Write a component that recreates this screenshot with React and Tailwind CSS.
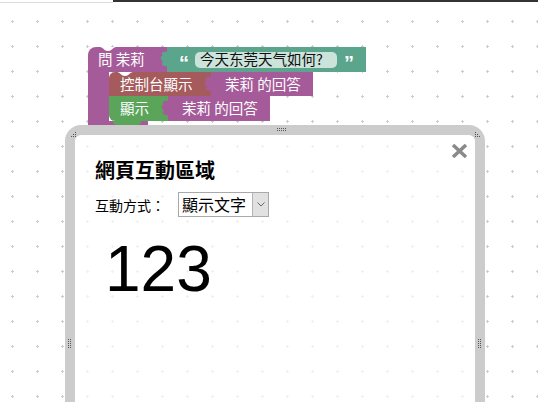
import React from 'react'

const CJK = { fontFamily: '"Noto Sans CJK TC", "Noto Sans CJK SC", sans-serif' }

const Tab = ({ color }) => (
  <svg className="absolute left-[-7px] top-[4px]" width="8" height="16" viewBox="0 0 8 16">
    <path d="M8 0 L8 16 L8 15 C3 16 0 13 3 11 C0 9 0 4 3 5 C0 2 3 0 8 1 Z" fill={color} />
  </svg>
)

const Notch = ({ left }) => (
  <svg className={'absolute top-0 ' + left} width="16" height="5" viewBox="0 0 16 5">
    <path d="M0 0 C3 0 4 4 8 4 C12 4 13 0 16 0 Z" fill="#ffffff" />
  </svg>
)

const Dots = ({ cols, rows, className }) => (
  <svg className={className} width={cols * 2} height={rows * 2}>
    {Array.from({ length: rows }).map((_, r) =>
      Array.from({ length: cols }).map((_, c) => (
        <rect key={r + '-' + c} x={c * 2} y={r * 2} width="1" height="1" fill="#555" />
      ))
    )}
  </svg>
)

const Grip = ({ className }) => (
  <svg className={className} width="8" height="8">
    <rect x="4" y="0" width="1" height="1" fill="#555" />
    <rect x="2" y="2" width="1" height="1" fill="#555" />
    <rect x="4" y="2" width="1" height="1" fill="#555" />
    <rect x="0" y="4" width="1" height="1" fill="#555" />
    <rect x="2" y="4" width="1" height="1" fill="#555" />
    <rect x="4" y="4" width="1" height="1" fill="#555" />
  </svg>
)

const Workspace = () => (
  <svg className="absolute inset-0" width="538" height="402">
    <defs>
      <pattern id="grid" x="0" y="9" width="25" height="25" patternUnits="userSpaceOnUse">
        <rect x="11" y="12" width="3" height="1" fill="#cccccc" />
        <rect x="12" y="11" width="1" height="3" fill="#cccccc" />
      </pattern>
    </defs>
    <rect x="0" y="3" width="538" height="399" fill="url(#grid)" />
  </svg>
)

// value block that plugs into the block on its left
const Value = ({ children, width }) => (
  <div className={'relative h-full bg-[#a55b99] flex items-center pl-[14px] ' + width}>
    <Tab color="#a55b99" />
    <span className="whitespace-nowrap">{children}</span>
  </div>
)

const Blocks = () => (
  <div className="absolute left-[88px] top-[47px] flex flex-col text-white text-[14.5px] leading-none" style={CJK}>
    {/* ask block header */}
    <div className="flex h-[25px]">
      <div className="relative w-[79px] bg-[#a55b99] rounded-tl-[8px] flex items-center pl-[10px]">
        <Notch left="left-[12px]" />
        <span className="whitespace-nowrap">問 茉莉</span>
      </div>
      <div className="relative w-[199px] bg-[#5ba58c] flex items-center">
        <Tab color="#5ba58c" />
        <span className="ml-[12px] mt-[6px] font-bold text-[20px] leading-none" style={{ fontFamily: '"Liberation Sans", Arial, sans-serif' }}>“</span>
        <span className="ml-[6px] h-[16px] w-[142px] rounded-[5px] bg-[#cbe3da] text-[#111] flex items-center pl-[5px] whitespace-nowrap">今天东莞天气如何?</span>
        <span className="ml-[7px] mt-[6px] font-bold text-[20px] leading-none" style={{ fontFamily: '"Liberation Sans", Arial, sans-serif' }}>”</span>
      </div>
    </div>

    {/* body with statements */}
    <div className="flex">
      <div className="w-[21px] bg-[#a55b99]" />
      <div className="flex flex-col">
        <div className="flex h-[24px]">
          <div className="relative w-[102px] bg-[#a55b5b] rounded-tl-[6px] flex items-center pl-[11px]">
            <Notch left="left-[8px]" />
            <span className="whitespace-nowrap">控制台顯示</span>
          </div>
          <Value width="w-[102px]">茉莉 的回答</Value>
        </div>
        <div className="flex h-[25px]">
          <div className="relative w-[59px] bg-[#5ba55b] rounded-bl-[6px] flex items-center pl-[11px]">
            <span className="whitespace-nowrap">顯示</span>
            <div className="absolute left-[4px] bottom-[-4px] w-[28px] h-[4px] bg-[#5ba55b] rounded-b-[4px]" />
          </div>
          <Value width="w-[102px]">茉莉 的回答</Value>
        </div>
      </div>
    </div>

    <div className="w-[60px] h-[14px] bg-[#a55b99] rounded-bl-[8px]" />
  </div>
)

const Dialog = () => (
  <div className="absolute left-[65px] top-[125px] w-[420px] h-[300px] border-[10px] border-[#cccccc] rounded-[16px] bg-white/70">
    <Dots cols={5} rows={2} className="absolute left-[202px] top-[-7px]" />
    <Grip className="absolute left-[-4px] top-[-3px]" />
    <Grip className="absolute right-[-5px] top-[-3px] -scale-x-100" />
    <Dots cols={2} rows={5} className="absolute left-[-7px] top-[204px]" />
    <Dots cols={2} rows={5} className="absolute right-[-7px] top-[204px]" />

    <svg className="absolute right-[7px] top-[9px]" width="17" height="14" viewBox="0 0 17 14">
      <path d="M2 1 L15 13 M15 1 L2 13" stroke="#8a8a8a" strokeWidth="3.5" />
    </svg>

    <div className="pl-[20px] pt-[23px] text-black" style={CJK}>
      <h1 className="text-[20px] font-bold leading-[24px]">網頁互動區域</h1>
      <div className="mt-[10px] flex items-center">
        <span className="text-[14px] leading-none">互動方式：</span>
        <div className="ml-[13px] w-[91px] h-[25px] border border-[#a9a9a9] bg-white flex">
          <span className="flex-1 pl-[3px] text-[16px] leading-[23px] whitespace-nowrap">顯示文字</span>
          <span className="w-[16px] bg-[#e1e1e1] border-l border-[#b5b5b5] flex items-center justify-center">
            <svg width="8" height="5" viewBox="0 0 8 5">
              <path d="M0.5 0.5 L4 4 L7.5 0.5" stroke="#666" fill="none" />
            </svg>
          </span>
        </div>
      </div>
      <div className="mt-[20px] pl-[10px] text-[64px] leading-none" style={{ fontFamily: '"Liberation Sans", Arial, sans-serif' }}>
        123
      </div>
    </div>
  </div>
)

export default function App() {
  return (
    <div className="relative w-[538px] h-[402px] overflow-hidden bg-white">
      <div className="flex">
        <div className="w-[113px] h-[3px] border-b border-[#dddddd]" />
        <div className="flex-1 h-[2px] bg-[#333333]" />
      </div>
      <Workspace />
      <Blocks />
      <Dialog />
    </div>
  )
}
